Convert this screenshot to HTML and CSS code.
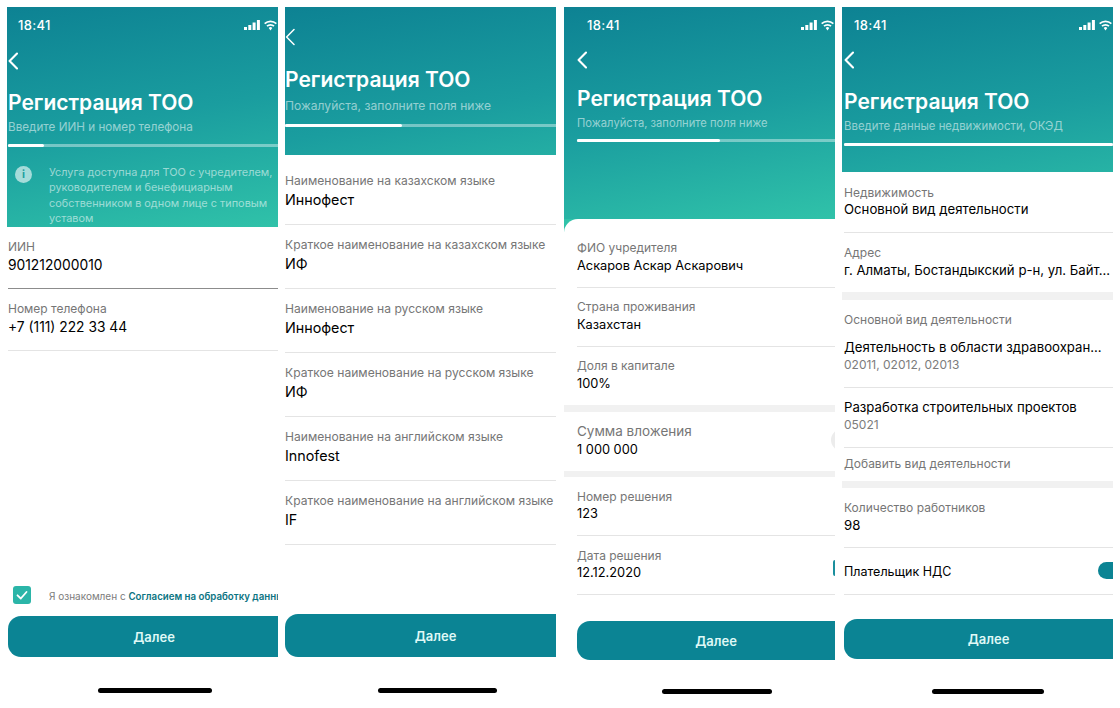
FILE: index.html
```html
<!DOCTYPE html>
<html lang="ru">
<head>
<meta charset="utf-8">
<title>Регистрация ТОО</title>
<link rel="stylesheet" href="styles.css">
</head>
<body>
<svg class="defs" width="0" height="0" aria-hidden="true">
  <symbol id="back" viewBox="0 0 10 18"><path d="M9 1.5 1.600 9 9 16.500" fill="none" stroke="currentColor" stroke-width="2.100" stroke-linecap="round" stroke-linejoin="round"/></symbol>
  <symbol id="back-thin" viewBox="0 0 10 18"><path d="M9 1.500 1.600 9 9 16.500" fill="none" stroke="currentColor" stroke-width="1.500" stroke-linecap="round" stroke-linejoin="round"/></symbol>
  <symbol id="signal" viewBox="0 0 16 10"><path d="M0 7h3v3H0zM4.300 5h3v5h-3zM8.600 2.500h3V10h-3zM12.900 0h3v10h-3z" fill="currentColor"/></symbol>
  <symbol id="wifi" viewBox="0 0 15 11"><path d="M7.500 2.200c2 0 3.900.8 5.300 2.100l1.100-1.200A9.400 9.400 0 0 0 7.500.500 9.400 9.400 0 0 0 1.100 3.100l1.100 1.200a7.700 7.700 0 0 1 5.300-2.100Zm0 3.500c1.100 0 2.100.4 2.900 1.100l1.200-1.200a6 6 0 0 0-8.200 0l1.200 1.200c.8-.7 1.800-1.100 2.900-1.100Zm0 3.300-1.800-1.100a2.600 2.600 0 0 1 3.600 0L7.500 10.500 5.700 7.900Z" fill="currentColor"/></symbol>
</svg>

<main class="board">
  <section class="screen s1">
    <header class="head">
      <div class="status"><span class="time">18:41</span><span class="sys"><svg class="i-signal"><use href="#signal"/></svg><svg class="i-wifi"><use href="#wifi"/></svg></span></div>
      <svg class="back"><use href="#back"/></svg>
      <h1 class="title">Регистрация ТОО</h1>
      <p class="sub">Введите ИИН и номер телефона</p>
      <div class="track"><div class="fill"></div></div>
      <div class="notice">
        <span class="info">i</span>
        <p class="notice-text">Услуга доступна для ТОО с учредителем, руководителем и бенефициарным собственником в одном лице с типовым уставом</p>
      </div>
    </header>
    <div class="fields">
      <div class="field dark"><span class="label">ИИН</span><span class="value">901212000010</span></div>
      <div class="field"><span class="label">Номер телефона</span><span class="value">+7 (111) 222 33 44</span></div>
    </div>
    <footer class="foot">
      <div class="consent">
        <span class="check"><svg viewBox="0 0 18 18" width="18" height="18"><path d="M4.500 9.300 7.800 12.500 13.500 6" fill="none" stroke="#fff" stroke-width="1.800" stroke-linecap="round" stroke-linejoin="round"/></svg></span>
        <span class="consent-text">Я ознакомлен с <b>Согласием на обработку данных</b></span>
      </div>
      <button class="next" type="button">Далее</button>
      <div class="home"></div>
    </footer>
  </section>

  <section class="screen s2">
    <header class="head">
      <svg class="back"><use href="#back-thin"/></svg>
      <h1 class="title">Регистрация ТОО</h1>
      <p class="sub">Пожалуйста, заполните поля ниже</p>
      <div class="track"><div class="fill"></div></div>
    </header>
    <div class="fields">
      <div class="field"><span class="label">Наименование на казахском языке</span><span class="value">Иннофест</span></div>
      <div class="field"><span class="label">Краткое наименование на казахском языке</span><span class="value">ИФ</span></div>
      <div class="field"><span class="label">Наименование на русском языке</span><span class="value">Иннофест</span></div>
      <div class="field"><span class="label">Краткое наименование на русском языке</span><span class="value">ИФ</span></div>
      <div class="field"><span class="label">Наименование на английском языке</span><span class="value">Innofest</span></div>
      <div class="field"><span class="label">Краткое наименование на английском языке</span><span class="value">IF</span></div>
    </div>
    <footer class="foot">
      <button class="next" type="button">Далее</button>
      <div class="home"></div>
    </footer>
  </section>

  <section class="screen s3">
    <header class="head">
      <div class="status"><span class="time">18:41</span><span class="sys"><svg class="i-signal"><use href="#signal"/></svg><svg class="i-wifi"><use href="#wifi"/></svg></span></div>
      <svg class="back"><use href="#back"/></svg>
      <h1 class="title">Регистрация ТОО</h1>
      <p class="sub">Пожалуйста, заполните поля ниже</p>
      <div class="track"><div class="fill"></div></div>
    </header>
    <div class="fields">
      <div class="field"><span class="label">ФИО учредителя</span><span class="value small">Аскаров Аскар Аскарович</span></div>
      <div class="field"><span class="label">Страна проживания</span><span class="value small">Казахстан</span></div>
      <div class="field plain"><span class="label">Доля в капитале</span><span class="value small">100%</span></div>
      <div class="band"></div>
      <div class="field plain has-stub"><div><span class="label big">Сумма вложения</span><span class="value small">1 000 000</span></div><span class="stub-round"></span></div>
      <div class="band short"></div>
      <div class="field tight"><span class="label">Номер решения</span><span class="value small">123</span></div>
      <div class="field tight has-stub"><div><span class="label">Дата решения</span><span class="value small">12.12.2020</span></div><span class="stub-box"></span></div>
    </div>
    <footer class="foot">
      <button class="next" type="button">Далее</button>
      <div class="home"></div>
    </footer>
  </section>

  <section class="screen s4">
    <header class="head">
      <div class="status"><span class="time">18:41</span><span class="sys"><svg class="i-signal"><use href="#signal"/></svg><svg class="i-wifi"><use href="#wifi"/></svg></span></div>
      <svg class="back"><use href="#back"/></svg>
      <h1 class="title">Регистрация ТОО</h1>
      <p class="sub">Введите данные недвижимости, ОКЭД</p>
      <div class="track"><div class="fill"></div></div>
    </header>
    <div class="fields">
      <div class="field top"><span class="label">Недвижимость</span><span class="value small">Основной вид деятельности</span></div>
      <div class="field plain"><span class="label">Адрес</span><span class="value small">г. Алматы, Бостандыкский р-н, ул. Байт...</span></div>
      <div class="band wide"></div>
      <div class="field group"><span class="label">Основной вид деятельности</span><span class="value small gap">Деятельность в области здравоохран...</span><span class="code">02011, 02012, 02013</span></div>
      <div class="field"><span class="value small">Разработка строительных проектов</span><span class="code">05021</span></div>
      <div class="field add plain"><span class="label">Добавить вид деятельности</span></div>
      <div class="band"></div>
      <div class="field"><span class="label">Количество работников</span><span class="value small">98</span></div>
      <div class="field toggle-row"><span class="value small">Плательщик НДС</span><span class="toggle"></span></div>
    </div>
    <footer class="foot">
      <button class="next" type="button">Далее</button>
      <div class="home"></div>
    </footer>
  </section>
</main>
</body>
</html>
```
FILE: styles.css
```css
* { box-sizing: border-box; }
html, body { margin: 0; height: 708px; background: #fff; overflow: hidden; }
body { font-family: Inter, "Liberation Sans", sans-serif; color: #000; }
.defs { display: block; height: 0; }
h1, p { margin: 0; }

.board { display: flex; padding: 7px 0 0 7px; height: 708px; }
.screen { display: flex; flex-direction: column; width: 271px; height: 701px; overflow: hidden; flex: none; --pad: 1px; }
.s1 { margin-right: 7px; --pad: 1px; }
.s2 { margin-right: 8px; --pad: 0px; }
.s3 { margin-right: 7px; --pad: 13px; }
.s4 { --pad: 2px; }

.head {
  background: linear-gradient(170deg, #0d8293 0%, #1a9d9f 50%, #30c2a9 100%) no-repeat;
  background-size: 100% 220px;
  padding-left: var(--pad);
  flex: none;
  color: #fff;
}
.s1 .head { height: 220px; padding-top: 9px; }
.s2 .head { height: 148px; padding-top: 21px; }
.s3 .head { height: 225px; padding-top: 9px; background-size: 100% 212px; background-color: #30c2a9; }
.s4 .head { height: 165px; padding-top: 9px; }

.status { display: flex; justify-content: space-between; align-items: center; height: 18px; padding-left: 10px; }
.time { font-size: 13px; font-weight: 500; letter-spacing: .3px; }
.sys { display: flex; align-items: center; gap: 3px; }
.i-signal { width: 16px; height: 10px; display: block; }
.i-wifi { width: 15px; height: 11px; display: block; }

.back { display: block; width: 10px; height: 18px; margin-top: 18px; }
.s2 .back { margin-top: 0; }
.s3 .back { margin-top: 17px; }
.s4 .back { margin-top: 17px; }

.title { font-size: 21px; line-height: 26px; font-weight: 600; margin-top: 20px; white-space: nowrap; }
.s2 .title { margin-top: 21px; }
.s3 .title { margin-top: 17px; }
.s4 .title { margin-top: 20px; }

.sub { font-size: 11.700px; line-height: 18px; color: rgba(255,255,255,.55); margin-top: 2px; white-space: nowrap; }
.s2 .sub { margin-top: 4px; font-size: 12.100px; }
.s3 .sub { margin-top: 2px; font-size: 11.200px; }
.s4 .sub { margin-top: 2px; font-size: 11.400px; }

.track { height: 3px; margin-top: 8px; background: rgba(255,255,255,.4); }
.s2 .track { margin-top: 9px; }
.s3 .track { margin-top: 7px; }
.fill { height: 100%; background: #fff; border-radius: 2px; }
.s1 .fill { width: 36px; }
.s2 .fill { width: 117px; }
.s3 .fill { width: 143px; }
.s4 .fill { width: 100%; }

.notice { display: flex; padding: 18px 0 0 7px; }
.info { flex: none; width: 17px; height: 17px; margin-top: 1px; border-radius: 50%; background: rgba(255,255,255,.6); color: #1d9f9f; font-size: 11px; line-height: 17px; font-weight: 700; text-align: center; }
.notice-text { margin-left: 17px; font-size: 10.900px; line-height: 15.400px; color: rgba(255,255,255,.55); }

.fields { flex: none; background: #fff; padding-left: var(--pad); }
.s2 .fields { padding-top: 6px; }
.s3 .fields { margin-top: -13px; padding-top: 10px; border-top-left-radius: 14px; }

.field { display: block; padding: 11px 0 14px; border-bottom: 1px solid #e4e4e4; }
.field.dark { border-bottom-color: #8c8c8c; }
.s2 .field { padding-bottom: 15px; }
.s3 .field { padding: 9px 0 13px; }
.s3 .field.plain { border-bottom: 0; }
.s3 .has-stub.plain { padding-top: 9px; }
.s3 .field.tight { padding: 10px 0 13px; }
.s4 .field { padding: 10px 0 13px; }
.s4 .field.plain { border-bottom: 0; }
.s4 .field.top { padding: 11px 0 14px; }
.s4 .field.group { padding-top: 10px; }
.s4 .field.add { padding: 6px 0 9px; }

.label { display: block; font-size: 12px; line-height: 18px; color: #767676; white-space: nowrap; }
.s2 .label { font-size: 12.100px; }
.s3 .label, .s4 .label { line-height: 16px; padding-top: 2px; }
.label.big { font-size: 13.500px; }
.value { display: block; font-size: 13.800px; line-height: 18px; color: #000; white-space: nowrap; }
.s2 .value { font-size: 14.300px; line-height: 19px; }
.value.small { font-size: 13.200px; }
.s3 .value.small { font-size: 12.800px; line-height: 20px; margin-bottom: -2px; }
.s3 .has-stub.plain .value.small { margin-top: 1px; }
.s3 .tight .value.small { line-height: 17px; margin-bottom: 0; }
.s4 .top .value.small { line-height: 17px; }
.value.gap { margin-top: 10px; }
.code { display: block; font-size: 12px; line-height: 18px; color: #7c7c7c; }

.band { height: 7px; background: #f1f1f1; margin-left: calc(0px - var(--pad)); }
.band.short { height: 6px; }
.band.wide { height: 8px; }

.has-stub { display: flex; justify-content: space-between; align-items: center; }
.stub-round { width: 22px; height: 22px; border-radius: 50%; background: #ececec; margin-right: -18px; }
.stub-box { width: 16px; height: 16px; border: 2px solid #1a8f9d; border-radius: 2px; margin-right: -14px; margin-top: 8px; }

.s4 .toggle-row { display: flex; justify-content: space-between; align-items: center; height: 47px; padding: 0; }
.s4 .toggle-row .value { font-size: 12.500px; margin-top: 2px; }
.toggle { width: 30px; height: 17px; border-radius: 9px; background: #0b8494; margin-right: -15px; margin-top: -2px; }

.foot { margin-top: auto; padding-left: var(--pad); }
.consent { display: flex; align-items: center; height: 18px; margin-bottom: 12px; padding-left: 5px; }
.check { flex: none; width: 18px; height: 18px; border-radius: 3px; background: #2bb5a8; }
.consent-text { margin-left: 18px; padding-top: 2px; font-size: 10px; color: #7c7c7c; white-space: nowrap; overflow: hidden; }
.consent-text b { font-weight: 600; font-size: 9.700px; color: #0b7482; }

.next { display: block; width: 100%; border: 0; background: #0b8494; color: #dff8f6; font: 600 13px/1 Inter, "Liberation Sans", sans-serif; border-radius: 13px 0 0 13px; text-align: center; height: 41px; }
.home { height: 5px; border-radius: 3px; background: #000; }

.s1 .next { padding: 2px 0 0 22px; }
.s1 .home { width: 114px; margin: 31px 0 15px 90px; }
.s2 .next { height: 43px; padding: 1px 0 0 30px; }
.s2 .home { width: 119px; margin: 31px 0 15px 93px; }
.s3 .next { height: 39px; padding: 2px 0 0 20px; }
.s3 .home { width: 110px; margin: 29px 0 14px 85px; }
.s4 .next { height: 40px; padding: 0 0 0 20px; }
.s4 .home { width: 112px; margin: 30px 0 14px 88px; }
```
